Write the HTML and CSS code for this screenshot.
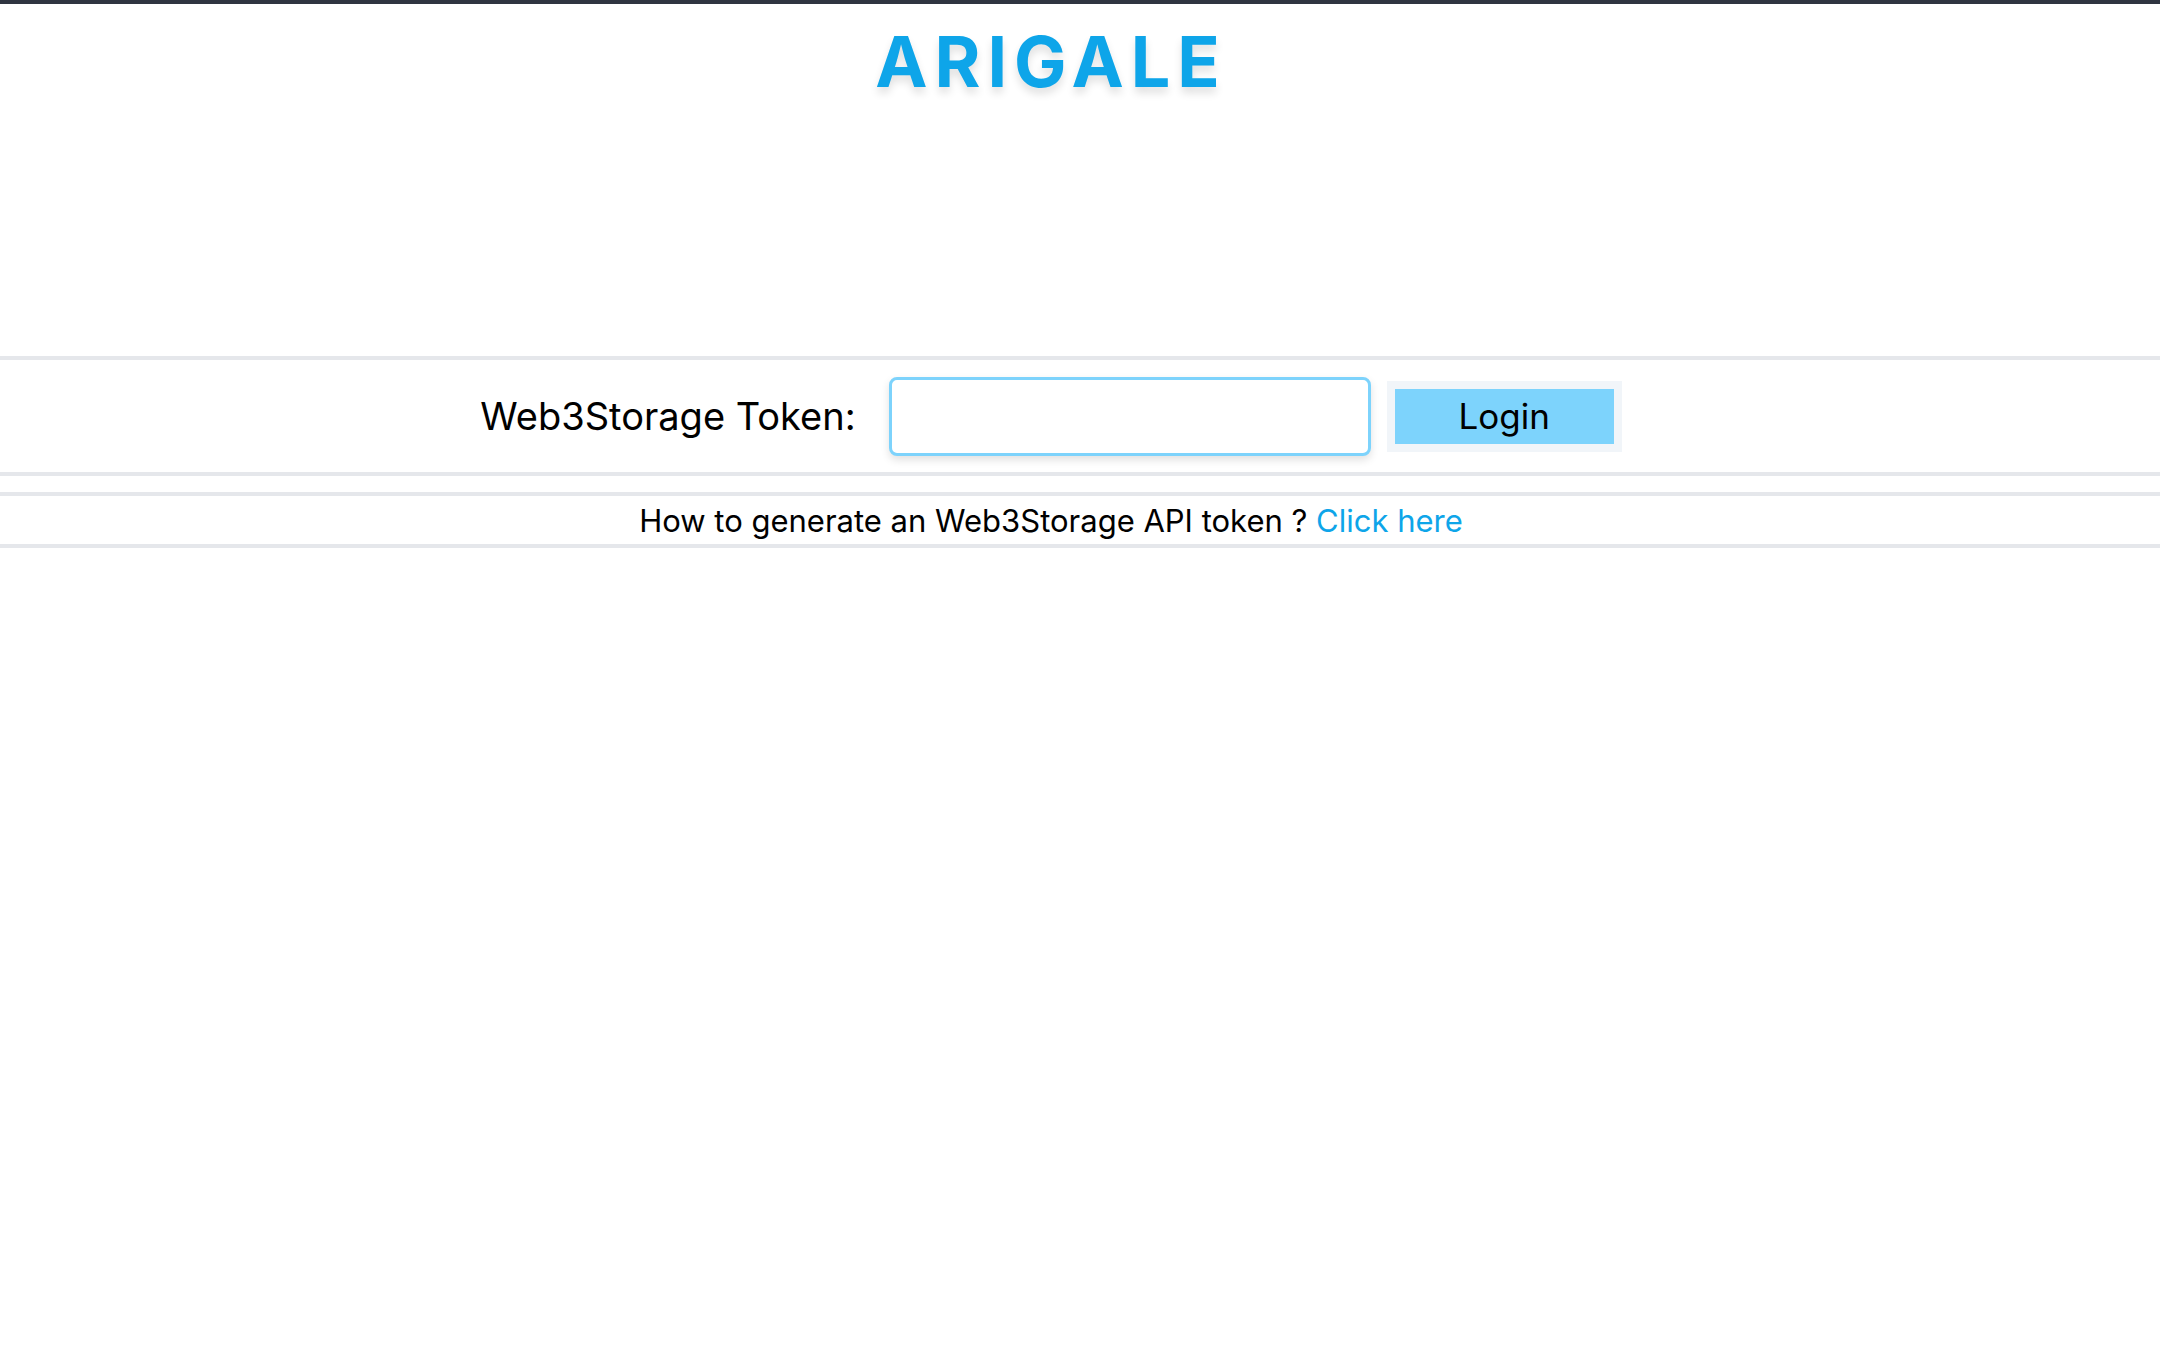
FILE: index.html
```html
<!DOCTYPE html>
<html lang="en">
<head>
<meta charset="utf-8">
<title>Arigale</title>
<link rel="stylesheet" href="styles.css">
</head>
<body>
<div class="topbar"></div>
<header class="header">
  <h1 class="brand">ARIGALE</h1>
</header>
<section class="login-section">
  <form class="login-row">
    <label class="login-label" for="token">Web3Storage Token:</label>
    <input class="token-input" id="token" type="text">
    <div class="btn-frame"><button class="login-btn" type="button">Login</button></div>
  </form>
</section>
<section class="help-section">
  <p class="help-text">How to generate an Web3Storage API token ? <a class="help-link" href="#">Click here</a></p>
</section>
</body>
</html>
```
FILE: styles.css
```css
html, body {
  margin: 0;
  padding: 0;
  background: #ffffff;
}
body {
  font-family: Inter, "Noto Sans", "Liberation Sans", sans-serif;
  color: #000000;
}
.topbar {
  height: 4px;
  background: #2f3541;
}
.header {
  height: 352px;
  padding-right: 58px;
  text-align: center;
}
.brand {
  margin: 0;
  padding-top: 23px;
  font-size: 70px;
  line-height: 1;
  font-weight: 700;
  letter-spacing: 0.1em;
  color: #0ea5e9;
  text-shadow: 0 6px 8px rgba(0, 0, 0, 0.12);
}
.login-section {
  border-top: 4px solid #e5e7eb;
  border-bottom: 4px solid #e5e7eb;
}
.login-row {
  margin: 0;
  height: 112px;
  padding-right: 58px;
  display: flex;
  align-items: center;
  justify-content: center;
}
.login-label {
  font-size: 38px;
  margin-right: 33px;
}
.token-input {
  box-sizing: border-box;
  width: 482px;
  height: 79px;
  border: 3px solid #7dd3fc;
  border-radius: 8px;
  background: #ffffff;
  box-shadow: 0 4px 8px rgba(0, 0, 0, 0.12);
  outline: none;
  font-size: 30px;
  font-family: inherit;
  padding: 0 14px;
  margin-right: 16px;
}
.btn-frame {
  background: #f1f5f9;
  padding: 8px;
  display: flex;
}
.login-btn {
  width: 219px;
  height: 55px;
  border: 0;
  background: #7dd3fc;
  color: #000000;
  font-family: inherit;
  font-size: 35px;
  padding: 0;
  cursor: pointer;
}
.help-section {
  margin-top: 16px;
  border-top: 4px solid #e5e7eb;
  border-bottom: 4px solid #e5e7eb;
}
.help-text {
  margin: 0;
  height: 48px;
  padding-right: 58px;
  display: flex;
  align-items: center;
  justify-content: center;
  font-size: 31px;
  white-space: pre;
}
.help-link {
  color: #0ea5e9;
  text-decoration: none;
}
```
